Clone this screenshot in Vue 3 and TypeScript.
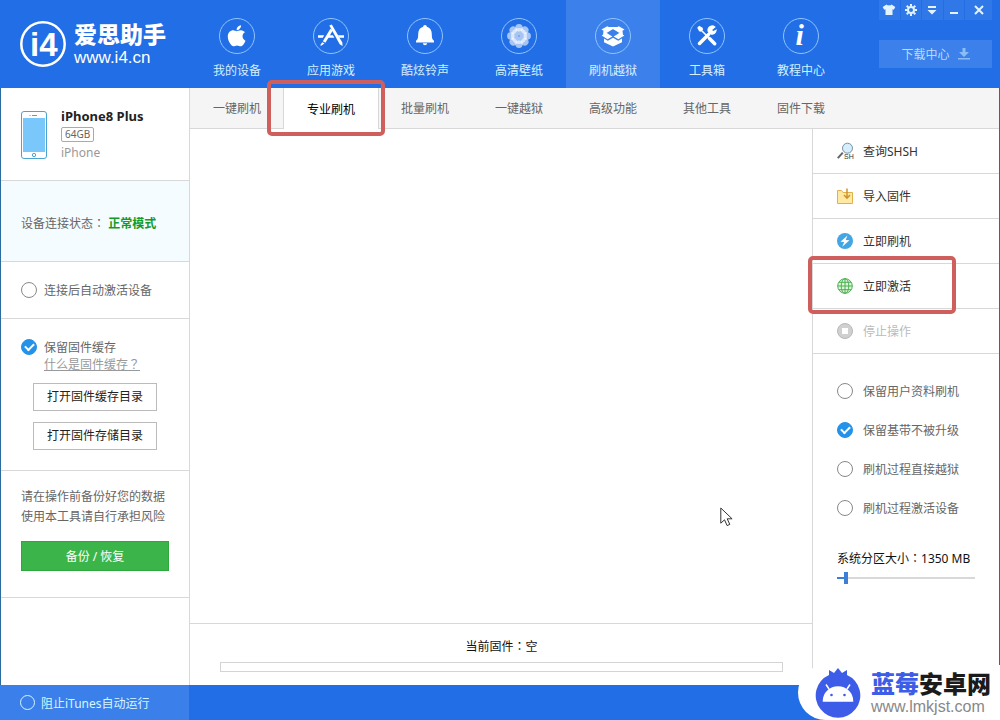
<script setup lang="ts">
import { ref } from 'vue'

interface NavItem { id: string; label: string }
interface Option { label: string; checked: boolean }

const navItems: NavItem[] = [
  { id: 'device', label: '我的设备' },
  { id: 'apps', label: '应用游戏' },
  { id: 'bell', label: '酷炫铃声' },
  { id: 'photos', label: '高清壁纸' },
  { id: 'flash', label: '刷机越狱' },
  { id: 'tools', label: '工具箱' },
  { id: 'info', label: '教程中心' },
]
const activeNav = ref('flash')

const tabs: string[] = ['一键刷机', '专业刷机', '批量刷机', '一键越狱', '高级功能', '其他工具', '固件下载']
const activeTab = ref('专业刷机')

const actions: NavItem[] = [
  { id: 'shsh', label: '查询SHSH' },
  { id: 'import', label: '导入固件' },
  { id: 'bolt', label: '立即刷机' },
  { id: 'globe', label: '立即激活' },
  { id: 'stop', label: '停止操作' },
]

const options = ref<Option[]>([
  { label: '保留用户资料刷机', checked: false },
  { label: '保留基带不被升级', checked: true },
  { label: '刷机过程直接越狱', checked: false },
  { label: '刷机过程激活设备', checked: false },
])

const autoActivate = ref(false)
const keepCache = ref(true)
const blockItunes = ref(false)
const partition = ref(1350)
const petals: number[] = [0, 45, 90, 135, 180, 225, 270, 315]
const teeth: number[] = [0, 45, 90, 135, 180, 225, 270, 315]
</script>

<template>
  <div class="app">
    <header class="header">
      <div class="brand">
        <svg class="brand-mark" viewBox="0 0 46 46" aria-hidden="true">
          <circle cx="23" cy="23" r="21.7" />
          <text x="10" y="35">i4</text>
        </svg>
        <div class="brand-text">
          <strong>爱思助手</strong>
          <span>www.i4.cn</span>
        </div>
      </div>

      <nav class="nav">
        <button
          v-for="item in navItems"
          :key="item.id"
          type="button"
          class="nav-item"
          :class="{ active: item.id === activeNav }"
          @click="activeNav = item.id"
        >
          <svg class="nav-icon" viewBox="0 0 36 36" aria-hidden="true">
            <circle class="ring" cx="18" cy="18" r="17.5" />
            <g v-if="item.id === 'device'" class="solid" transform="translate(8.6 5.7) scale(.047)">
              <path d="M318.7 268.7c-.2-36.7 16.4-64.4 50-84.8-18.8-26.9-47.2-41.7-84.7-44.6-35.5-2.8-74.3 20.7-88.5 20.7-15 0-49.4-19.7-76.4-19.7C63.3 141.2 4 184.8 4 273.5q0 39.3 14.4 81.2c12.8 36.7 59 126.7 107.2 125.2 25.2-.6 43-17.9 75.8-17.9 31.8 0 48.3 17.9 76.4 17.9 48.6-.7 90.4-82.5 102.6-119.3-65.2-30.7-61.7-90-61.7-91.9zm-56.6-164.2c27.3-32.4 24.8-61.9 24-72.5-24.1 1.4-52 16.4-67.9 34.9-17.5 19.8-27.8 44.3-25.6 71.9 26.1 2 49.9-11.4 69.5-34.3z" />
            </g>
            <g v-else-if="item.id === 'apps'" class="solid">
              <path d="M16.3 7.6 18.8 6.6 29.3 24.6 29.6 28 26.7 26.2z" />
              <path d="M17.4 10.8 20 12.2 12.4 24.8 9.8 23.3z" />
              <path d="M9.2 24.2 11.5 25.5 8.2 27.8 7.2 27.2z" />
              <path d="M5 17.2h6.2l-1.4 2.5H5zM14.6 17.2h5.3l1.5 2.5h-8.3zM24.9 17.2H31v2.5h-4.7z" />
            </g>
            <g v-else-if="item.id === 'bell'" class="solid">
              <path d="M18 7c1.1 0 1.8.7 1.8 1.8 3.3.9 5 3.5 5 7.2 0 4 .5 5.6 2.2 6.8v1.8H9v-1.8c1.7-1.2 2.2-2.8 2.2-6.8 0-3.7 1.7-6.3 5-7.2C16.2 7.7 16.9 7 18 7zM15.8 25.3h4.4c-.2 1.3-1.1 2-2.2 2s-2-.7-2.2-2z" />
            </g>
            <g v-else-if="item.id === 'photos'">
              <circle v-for="a in petals" :key="a" class="petal" cx="18" cy="9.8" r="3.7" :transform="`rotate(${a} 18 18)`" />
              <circle class="petal-core" cx="18" cy="18" r="8" />
              <circle class="petal-dot" cx="18" cy="18" r="1" />
            </g>
            <g v-else-if="item.id === 'flash'" class="solid">
              <path d="M12.3 8.2 17.6 11.3 12 14.7 6.4 11.6zM23.7 8.2 29.6 11.6 24 14.7 18.4 11.3zM11.6 15.1 17.4 18.5 12.6 21.2 6.6 17.6zM24.4 15.1 29.4 17.6 23.4 21.2 18.6 18.5z" />
              <path d="M9 20.6 12.8 22.7 18 19.7 23.2 22.7 27 20.6V24.2L18 28.6 9 24.2z" />
              <path d="M13 9h10v2.3H13zM8.5 12.5 11 13.5 12.5 15.5 8 17.5zM27.5 12.5 25 13.5 23.5 15.5 28 17.5z" />
            </g>
            <g v-else-if="item.id === 'tools'">
              <path class="tool-thin" d="m10.3 10.2 9 9" />
              <path class="tool-thick" d="m20.5 20.5 5.2 5.2M19.5 16.5l-9 9" />
              <path class="solid" d="m8.2 9.7 2-2 3.4 2.1.5 1.7-2.2 2.2-1.8-.5z" />
              <path class="wrench" d="M25.6 9.1A3.9 3.9 0 1 0 26.9 12.5L24 13.9 22.1 12z" />
            </g>
            <text v-else x="12.5" y="27" class="info-i">i</text>
          </svg>
          <span>{{ item.label }}</span>
        </button>
      </nav>

      <div class="header-side">
        <div class="window-controls">
          <button type="button" aria-label="皮肤">
            <svg viewBox="0 0 14 14"><path class="solid" d="M4.5 1.5c.8 1.2 4.2 1.2 5 0L13.3 4l-1.5 2.8-1.3-.6V12h-7V6.2l-1.3.6L.7 4z" /></svg>
          </button>
          <button type="button" aria-label="设置">
            <svg viewBox="0 0 14 14">
              <path v-for="a in teeth" :key="a" class="tooth" d="M7 1v2" :transform="`rotate(${a} 7 7)`" />
              <circle class="gear" cx="7" cy="7" r="3" />
            </svg>
          </button>
          <button type="button" aria-label="菜单">
            <svg viewBox="0 0 14 14"><path class="solid" d="M3 3h8v2H3zM2.5 7h9L7 11.5z" /></svg>
          </button>
          <button type="button" aria-label="最小化">
            <svg viewBox="0 0 14 14"><path class="solid" d="M3 9h8v2H3z" /></svg>
          </button>
          <button type="button" class="wide" aria-label="关闭">
            <svg viewBox="0 0 14 14"><path class="cross" d="m3 3 8 8M11 3l-8 8" /></svg>
          </button>
        </div>
        <button type="button" class="download">
          <span>下载中心</span>
          <svg viewBox="0 0 12 12" aria-hidden="true"><path d="M4.5 0h3v4H11L6 9 1 4h3.500zM0 10h12v1.500H0z" /></svg>
        </button>
      </div>
    </header>

    <main class="body">
      <aside class="sidebar">
        <section class="device">
          <svg class="phone" viewBox="0 0 26 48" aria-hidden="true">
            <rect class="phone-case" x=".5" y=".5" width="25" height="47" rx="2.5" />
            <rect class="phone-screen" x="2" y="7" width="22" height="34" />
            <path class="phone-line" d="M8.5 4.5h1M11 4.5h5" />
            <circle class="phone-line" cx="13" cy="44" r="1.7" />
          </svg>
          <div class="device-info">
            <strong>iPhone8 Plus</strong>
            <span class="capacity">64GB</span>
            <span class="model">iPhone</span>
          </div>
        </section>
        <section class="status">设备连接状态<span class="mark">：</span> <b>正常模式</b></section>
        <section class="auto">
          <label class="check"><input v-model="autoActivate" type="checkbox" /><span>连接后自动激活设备</span></label>
        </section>
        <section class="cache">
          <label class="check"><input v-model="keepCache" type="checkbox" /><span>保留固件缓存</span></label>
          <a href="#">什么是固件缓存<span class="mark">？</span></a>
          <button type="button">打开固件缓存目录</button>
          <button type="button">打开固件存储目录</button>
        </section>
        <section class="backup">
          <p>请在操作前备份好您的数据<br />使用本工具请自行承担风险</p>
          <button type="button">备份 / 恢复</button>
        </section>
      </aside>

      <div class="workspace">
        <div class="tabs" role="tablist">
          <button
            v-for="tab in tabs"
            :key="tab"
            type="button"
            role="tab"
            class="tab"
            :class="{ active: tab === activeTab }"
            :aria-selected="tab === activeTab"
            @click="activeTab = tab"
          >
            {{ tab }}
            <i v-if="tab === '专业刷机'" class="marker marker-tab"></i>
          </button>
        </div>

        <div class="panes">
          <div class="center">
            <div class="log">
              <svg class="cursor" viewBox="0 0 13 20" aria-hidden="true">
                <path d="M.8 1v15.2l3.7-3.4 2.6 5.8 2.7-1.2-2.6-5.600h4.900z" />
              </svg>
            </div>
            <div class="firmware">
              <label for="flash-progress">当前固件<span class="mark">：</span>空</label>
              <progress id="flash-progress" value="0" max="100"></progress>
            </div>
          </div>

          <aside class="actions">
            <button
              v-for="action in actions"
              :key="action.id"
              type="button"
              class="action"
              :disabled="action.id === 'stop'"
            >
              <svg viewBox="0 0 16 16" aria-hidden="true">
                <g v-if="action.id === 'shsh'">
                  <path class="lens-handle" d="m.8 15.2 5-5.5" />
                  <circle class="lens" cx="10.5" cy="5.2" r="5" />
                  <text x="7" y="16" class="lens-text">SH</text>
                </g>
                <g v-else-if="action.id === 'import'">
                  <path class="folder" d="M.5 2.5h4l1.5 2h9.5v11H.5z" />
                  <path class="folder-arrow" d="M10 .5V10M7 7l3 3.200L13 7" />
                </g>
                <g v-else-if="action.id === 'bolt'">
                  <circle class="bolt-bg" cx="8" cy="8" r="8" />
                  <path class="solid" d="M10.5 2.5 3.5 8.8 7.2 8.9 5.2 13.7 12.5 7.2 8.7 7.1z" />
                </g>
                <g v-else-if="action.id === 'globe'" class="globe">
                  <circle cx="8" cy="8" r="7.3" />
                  <ellipse cx="8" cy="8" rx="3.8" ry="7.3" />
                  <path d="M8 .7v14.6M.7 8h14.6M2 4.3h12M2 11.7h12" />
                </g>
                <g v-else>
                  <circle class="stop-bg" cx="8" cy="8" r="7.5" />
                  <rect class="solid" x="5" y="5" width="6" height="6" />
                </g>
              </svg>
              <span>{{ action.label }}</span>
              <i v-if="action.id === 'globe'" class="marker marker-action"></i>
            </button>

            <div class="options">
              <label v-for="option in options" :key="option.label" class="check">
                <input v-model="option.checked" type="checkbox" /><span>{{ option.label }}</span>
              </label>
            </div>
            <div class="partition">
              <label for="partition-size">系统分区大小<span class="mark">：</span>{{ partition }} MB</label>
              <input id="partition-size" v-model.number="partition" type="range" min="1200" max="4000" step="50" />
            </div>
          </aside>
        </div>
      </div>
    </main>

    <footer class="footer">
      <label class="check"><input v-model="blockItunes" type="checkbox" /><span>阻止iTunes自动运行</span></label>
    </footer>

    <div class="watermark">
      <svg viewBox="0 0 46 50" aria-hidden="true">
        <path class="berry" d="m14 3 5 3 4-5 4 5 5-3v5A22.3 22.3 0 1 1 14 8z" />
        <path class="robot" d="M8.5 34a14.5 14 0 0 1 29 0zM14 22l-3-4.5M32 22l3-4.5" />
        <circle class="berry" cx="16.5" cy="28" r="1.3" />
        <circle class="berry" cx="29.5" cy="28" r="1.3" />
      </svg>
      <div>
        <strong><b>蓝莓</b>安卓网</strong>
        <span>www.lmkjst.com</span>
      </div>
    </div>
  </div>
</template>

<style>
body {
  margin: 0;
}
</style>

<style scoped>
.app {
  position: relative;
  display: flex;
  flex-direction: column;
  min-height: 100vh;
  overflow: hidden;
  background: #fff;
  color: #666;
  font: 12px/20px "Noto Sans", "Noto Sans CJK SC", sans-serif;
}
.app * {
  box-sizing: border-box;
}
button {
  margin: 0;
  padding: 0;
  border: 0;
  background: none;
  color: inherit;
  font: inherit;
  cursor: pointer;
}
svg {
  display: block;
  flex: none;
  overflow: visible;
}
.solid {
  fill: #fff;
}
/* Traditional Chinese faces centre full-width punctuation in its cell */
.mark {
  font-family: "Noto Sans CJK TC", sans-serif;
  line-height: 1;
}

/* header */
.header {
  display: flex;
  height: 88px;
  background: #216ee6;
  color: #d6f0ff;
}
.brand {
  display: flex;
  flex: none;
  gap: 8px;
  width: 190px;
  padding: 21px 0 0 20px;
}
.brand-mark {
  width: 46px;
  height: 46px;
}
.brand-mark circle {
  fill: none;
  stroke: #fff;
  stroke-width: 2.5;
}
.brand-mark text {
  fill: #fff;
  font: bold 33px "Liberation Sans", sans-serif;
}
.brand-text {
  display: flex;
  flex-direction: column;
  color: #fff;
}
.brand-text strong {
  font: 900 23px/24px "Noto Sans CJK SC", sans-serif;
}
.brand-text span {
  font: 17px/26px "Liberation Sans", sans-serif;
}
.nav {
  display: flex;
  flex: 1;
}
.nav-item {
  display: flex;
  flex-direction: column;
  align-items: center;
  gap: 7px;
  width: 94px;
  padding-top: 18px;
}
.nav-item.active {
  background: #3b80eb;
}
.nav-icon {
  width: 36px;
  height: 36px;
}
.ring {
  fill: none;
  stroke: #8fc4fb;
  stroke-width: 1;
}
.petal {
  fill: #fff;
  fill-opacity: .6;
}
.petal-core {
  fill: #fff;
  fill-opacity: .6;
}
.petal-dot {
  fill: #6ba4f5;
}
.tool-thin {
  stroke: #fff;
  stroke-width: 1.5;
}
.tool-thick {
  fill: none;
  stroke: #fff;
  stroke-width: 3.5;
  stroke-linecap: round;
}
.wrench {
  fill: #fff;
  stroke: #fff;
  stroke-width: 1.5;
}
.info-i {
  fill: #fff;
  font: italic bold 30px "Liberation Serif", serif;
}
.header-side {
  display: flex;
  flex-direction: column;
  gap: 20px;
  width: 113px;
  margin-right: 8px;
}
.window-controls {
  display: flex;
  gap: 1px;
  height: 20px;
}
.window-controls button {
  display: flex;
  flex: 1;
  align-items: center;
  justify-content: center;
  background: #3078e8;
}
.window-controls .wide {
  flex: none;
  width: 27px;
}
.window-controls svg {
  width: 14px;
  height: 14px;
}
.window-controls .solid {
  fill: #e4f4ff;
}
.tooth,
.gear,
.cross {
  fill: none;
  stroke: #e4f4ff;
  stroke-width: 2;
}
.download {
  display: flex;
  align-items: center;
  justify-content: center;
  gap: 8px;
  height: 28px;
  background: #3b80eb;
  color: #b8dcfc;
}
.download span {
  padding-top: 2px;
}
.download svg {
  width: 12px;
  height: 12px;
  fill: #8bbdf5;
}

/* body */
.body {
  display: flex;
  flex: 1;
  border: solid #2a6c9e;
  border-width: 0 1px;
}
.sidebar {
  flex: none;
  width: 189px;
  border-right: 1px solid #d8d8d8;
}
.sidebar section {
  border-bottom: 1px solid #d8d8d8;
}
.check {
  display: flex;
  align-items: center;
  gap: 7px;
}
.check span {
  padding-top: 2px;
}
.check input {
  display: grid;
  place-items: center;
  appearance: none;
  flex: none;
  width: 16px;
  height: 16px;
  margin: 0;
  border: 1px solid #888;
  border-radius: 50%;
  background: #fff;
}
.check input:checked {
  border-color: #2492e8;
  background: #2492e8;
}
.check input:checked::after {
  content: "";
  width: 7px;
  height: 4px;
  border: solid #fff;
  border-width: 0 0 2px 2px;
  transform: translateY(-1px) rotate(-45deg);
}
.device {
  display: flex;
  gap: 14px;
  height: 93px;
  padding: 18px 0 0 20px;
}
.phone {
  width: 26px;
  height: 48px;
  margin-top: 5px;
}
.phone-case {
  fill: #fff;
  stroke: #4da3d0;
}
.phone-screen {
  fill: #79c7fb;
}
.phone-line {
  fill: none;
  stroke: #4da3d0;
}
.device-info {
  display: flex;
  flex-direction: column;
  align-items: flex-start;
}
.device-info strong {
  color: #222;
  font-size: 13px;
  line-height: 21px;
}
.capacity {
  padding: 0 3px;
  border: 1px solid #aaa;
  border-radius: 2px;
  font-size: 10px;
  line-height: 13px;
}
.model {
  margin-top: 1px;
  color: #999;
}
.status {
  height: 81px;
  padding: 33px 0 0 20px;
  background: #f5fcff;
}
.status b {
  color: #149a26;
}
.auto {
  height: 57px;
  padding: 17px 0 0 20px;
}
.cache {
  display: flex;
  flex-direction: column;
  align-items: flex-start;
  height: 152px;
  padding: 17px 0 0 20px;
}
.cache a {
  margin: -2px 0 9px 23px;
  color: #999;
  line-height: 18px;
}
.cache button {
  width: 124px;
  height: 28px;
  margin: 0 0 11px 12px;
  border: 1px solid #bbb;
  background: #fff;
  color: #222;
}
.backup {
  height: 127px;
  padding: 16px 20px 0;
}
.backup p {
  margin: 0 0 14px;
}
.backup button {
  width: 100%;
  height: 30px;
  padding-top: 2px;
  border: 1px solid #2da83c;
  background: #3bb54a;
  color: #fff;
}

/* workspace */
.workspace {
  display: flex;
  flex: 1;
  flex-direction: column;
  min-width: 0;
}
.tabs {
  display: flex;
  height: 41px;
  border-bottom: 1px solid #d8d8d8;
  background: #f5f5f5;
}
.tab {
  position: relative;
  width: 94px;
  padding-top: 2px;
}
.tab.active {
  height: 41px;
  background: #fff;
  box-shadow: -1px 0 #d8d8d8, 1px 0 #d8d8d8;
  color: #000;
}
.marker {
  position: absolute;
  z-index: 1;
  border: 4px solid #cf5f5c;
  border-radius: 5px;
  pointer-events: none;
}
.marker-tab {
  inset: -8px -7px -7px -17px;
}
.marker-action {
  inset: -8px 43px -6px -5px;
}
.panes {
  display: flex;
  flex: 1;
}
.center {
  display: flex;
  flex: 1;
  flex-direction: column;
}
.log {
  position: relative;
  flex: 1;
}
.cursor {
  position: absolute;
  top: 378px;
  left: 530px;
  width: 13px;
  height: 20px;
  fill: #fff;
  stroke: #333;
}
.firmware {
  display: flex;
  flex-direction: column;
  gap: 5px;
  height: 62px;
  padding: 13px 29px 0 30px;
  border-top: 1px solid #d8d8d8;
  color: #111;
  text-align: center;
}
.firmware progress {
  appearance: none;
  width: 100%;
  height: 10px;
  border: 1px solid #d4d4d4;
  background: #fff;
}
.firmware progress::-webkit-progress-bar {
  background: #fff;
}
.actions {
  flex: none;
  width: 187px;
  border-left: 1px solid #d8d8d8;
}
.action {
  position: relative;
  display: flex;
  align-items: center;
  gap: 10px;
  width: 100%;
  height: 45px;
  padding-left: 24px;
  border-bottom: 1px solid #d8d8d8;
  color: #333;
}
.action span {
  padding-top: 2px;
}
.action:disabled {
  color: #bbb;
}
.action svg {
  width: 16px;
  height: 16px;
}
.lens {
  fill: #d5edfc;
  stroke: #7a8f9e;
}
.lens-handle {
  stroke: #5e666e;
  stroke-width: 2;
}
.lens-text {
  fill: #333;
  font: 7px "Liberation Sans", sans-serif;
}
.folder {
  fill: #ffe9a3;
  stroke: #e2b04a;
}
.folder-arrow {
  fill: none;
  stroke: #cf922e;
  stroke-width: 1.5;
}
.bolt-bg {
  fill: #42a5e4;
}
.globe {
  fill: none;
  stroke: #4caf50;
}
.globe circle {
  fill: #dff5dc;
}
.stop-bg {
  fill: #d0d0d0;
  stroke: #b8b8b8;
}
.options {
  display: flex;
  flex-direction: column;
  gap: 17px;
  padding: 26px 0 0 24px;
}
.options .check {
  gap: 10px;
}
.partition {
  display: flex;
  flex-direction: column;
  gap: 3px;
  padding: 30px 24px 0;
  color: #111;
  white-space: nowrap;
}
.partition input {
  appearance: none;
  width: 100%;
  height: 12px;
  margin: 0;
  background: linear-gradient(90deg, #3d7fd6 8px, #d8d8d8 8px) center / 100% 2px no-repeat;
}
.partition input::-webkit-slider-thumb {
  appearance: none;
  width: 4px;
  height: 12px;
  background: #3d7fd6;
}

/* footer */
.footer {
  height: 35px;
  background: #216ee6;
  color: #d6f6ff;
}
.footer .check {
  gap: 6px;
  width: 189px;
  height: 35px;
  padding-left: 20px;
  background: #3b7fea;
}
.footer input {
  width: 15px;
  height: 15px;
  border-color: #d6f6ff;
  background: none;
}
.watermark {
  position: absolute;
  right: 0;
  bottom: 0;
  display: flex;
  gap: 10px;
  width: 202px;
  height: 55px;
  padding: 2px 0 0 17px;
  border-radius: 28px 0 0 28px;
  background: #fff;
}
.watermark svg {
  width: 46px;
  height: 50px;
}
.berry {
  fill: #3d5de8;
}
.robot {
  fill: #fff;
  stroke: #fff;
  stroke-width: 1.5;
}
.watermark div {
  display: flex;
  flex-direction: column;
}
.watermark strong {
  color: #1b1b1b;
  font: 900 24px/31px "Noto Sans CJK SC", sans-serif;
}
.watermark b {
  color: #3d5de8;
  font-weight: 900;
}
.watermark span {
  color: #888;
  font: 16px/17px "Liberation Sans", sans-serif;
}
</style>
